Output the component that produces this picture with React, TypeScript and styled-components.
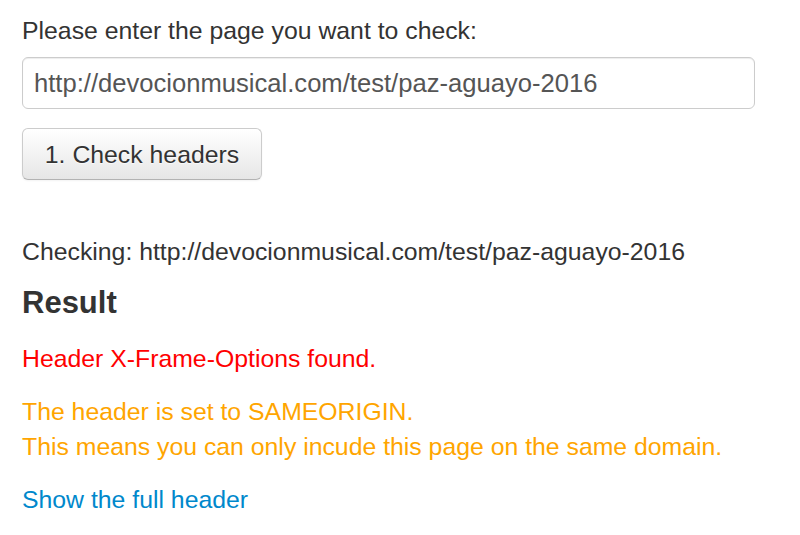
import React, { useState } from 'react';
import styled, { createGlobalStyle } from 'styled-components';

const GlobalStyle = createGlobalStyle`
  html, body {
    margin: 0;
    padding: 0;
    background: #fff;
  }
  body {
    font-family: "Liberation Sans", Arial, Helvetica, sans-serif;
    font-size: 24.8px;
    line-height: 35px;
    color: #333;
  }
`

const Page = styled.div`
  padding: 13px 22px 0 22px;
`

const Label = styled.label`
  display: block;
  margin-bottom: 9px;
`

const UrlInput = styled.input`
  display: block;
  box-sizing: border-box;
  width: 733px;
  height: 52px;
  margin: 0 0 19px 0;
  padding: 0 11px;
  font-family: inherit;
  font-size: 25.6px;
  color: #555;
  background: #fff;
  border: 1px solid #ccc;
  border-radius: 6px;
  box-shadow: inset 0 1px 1px rgba(0, 0, 0, 0.075);
  outline: none;
`

const Button = styled.button`
  display: block;
  box-sizing: border-box;
  width: 240px;
  height: 52px;
  padding: 0 20px;
  font: inherit;
  color: #333;
  text-shadow: 0 1px 1px rgba(255, 255, 255, 0.75);
  background: linear-gradient(to bottom, #ffffff, #e6e6e6);
  border: 1px solid #ccc;
  border-bottom-color: #b3b3b3;
  border-radius: 6px;
  box-shadow: inset 0 1px 0 rgba(255, 255, 255, 0.2), 0 1px 2px rgba(0, 0, 0, 0.05);
  cursor: pointer;
`

const Checking = styled.p`
  margin: 54px 0 0 0;
`

const Heading = styled.h4`
  margin: 13.5px 0 0 0;
  font-size: 31px;
  line-height: 40px;
  font-weight: bold;
  color: #333;
`

const Message = styled.p<{ $tone: 'error' | 'warning' }>`
  margin: 18px 0 0 0;
  color: ${p => (p.$tone === 'error' ? '#ff0000' : '#ffa500')};
`

const Link = styled.a`
  display: block;
  margin-top: 18px;
  color: #0088cc;
  text-decoration: none;
`

export default function App() {
  const [url, setUrl] = useState('http://devocionmusical.com/test/paz-aguayo-2016')

  return (
    <>
      <GlobalStyle />
      <Page>
        <Label htmlFor="url">Please enter the page you want to check:</Label>
        <UrlInput id="url" value={url} onChange={e => setUrl(e.target.value)} />
        <Button>1. Check headers</Button>
        <Checking>Checking: http://devocionmusical.com/test/paz-aguayo-2016</Checking>
        <Heading>Result</Heading>
        <Message $tone="error">Header X-Frame-Options found.</Message>
        <Message $tone="warning">
          The header is set to SAMEORIGIN.<br />
          This means you can only incude this page on the same domain.
        </Message>
        <Link href="#">Show the full header</Link>
      </Page>
    </>
  )
}
